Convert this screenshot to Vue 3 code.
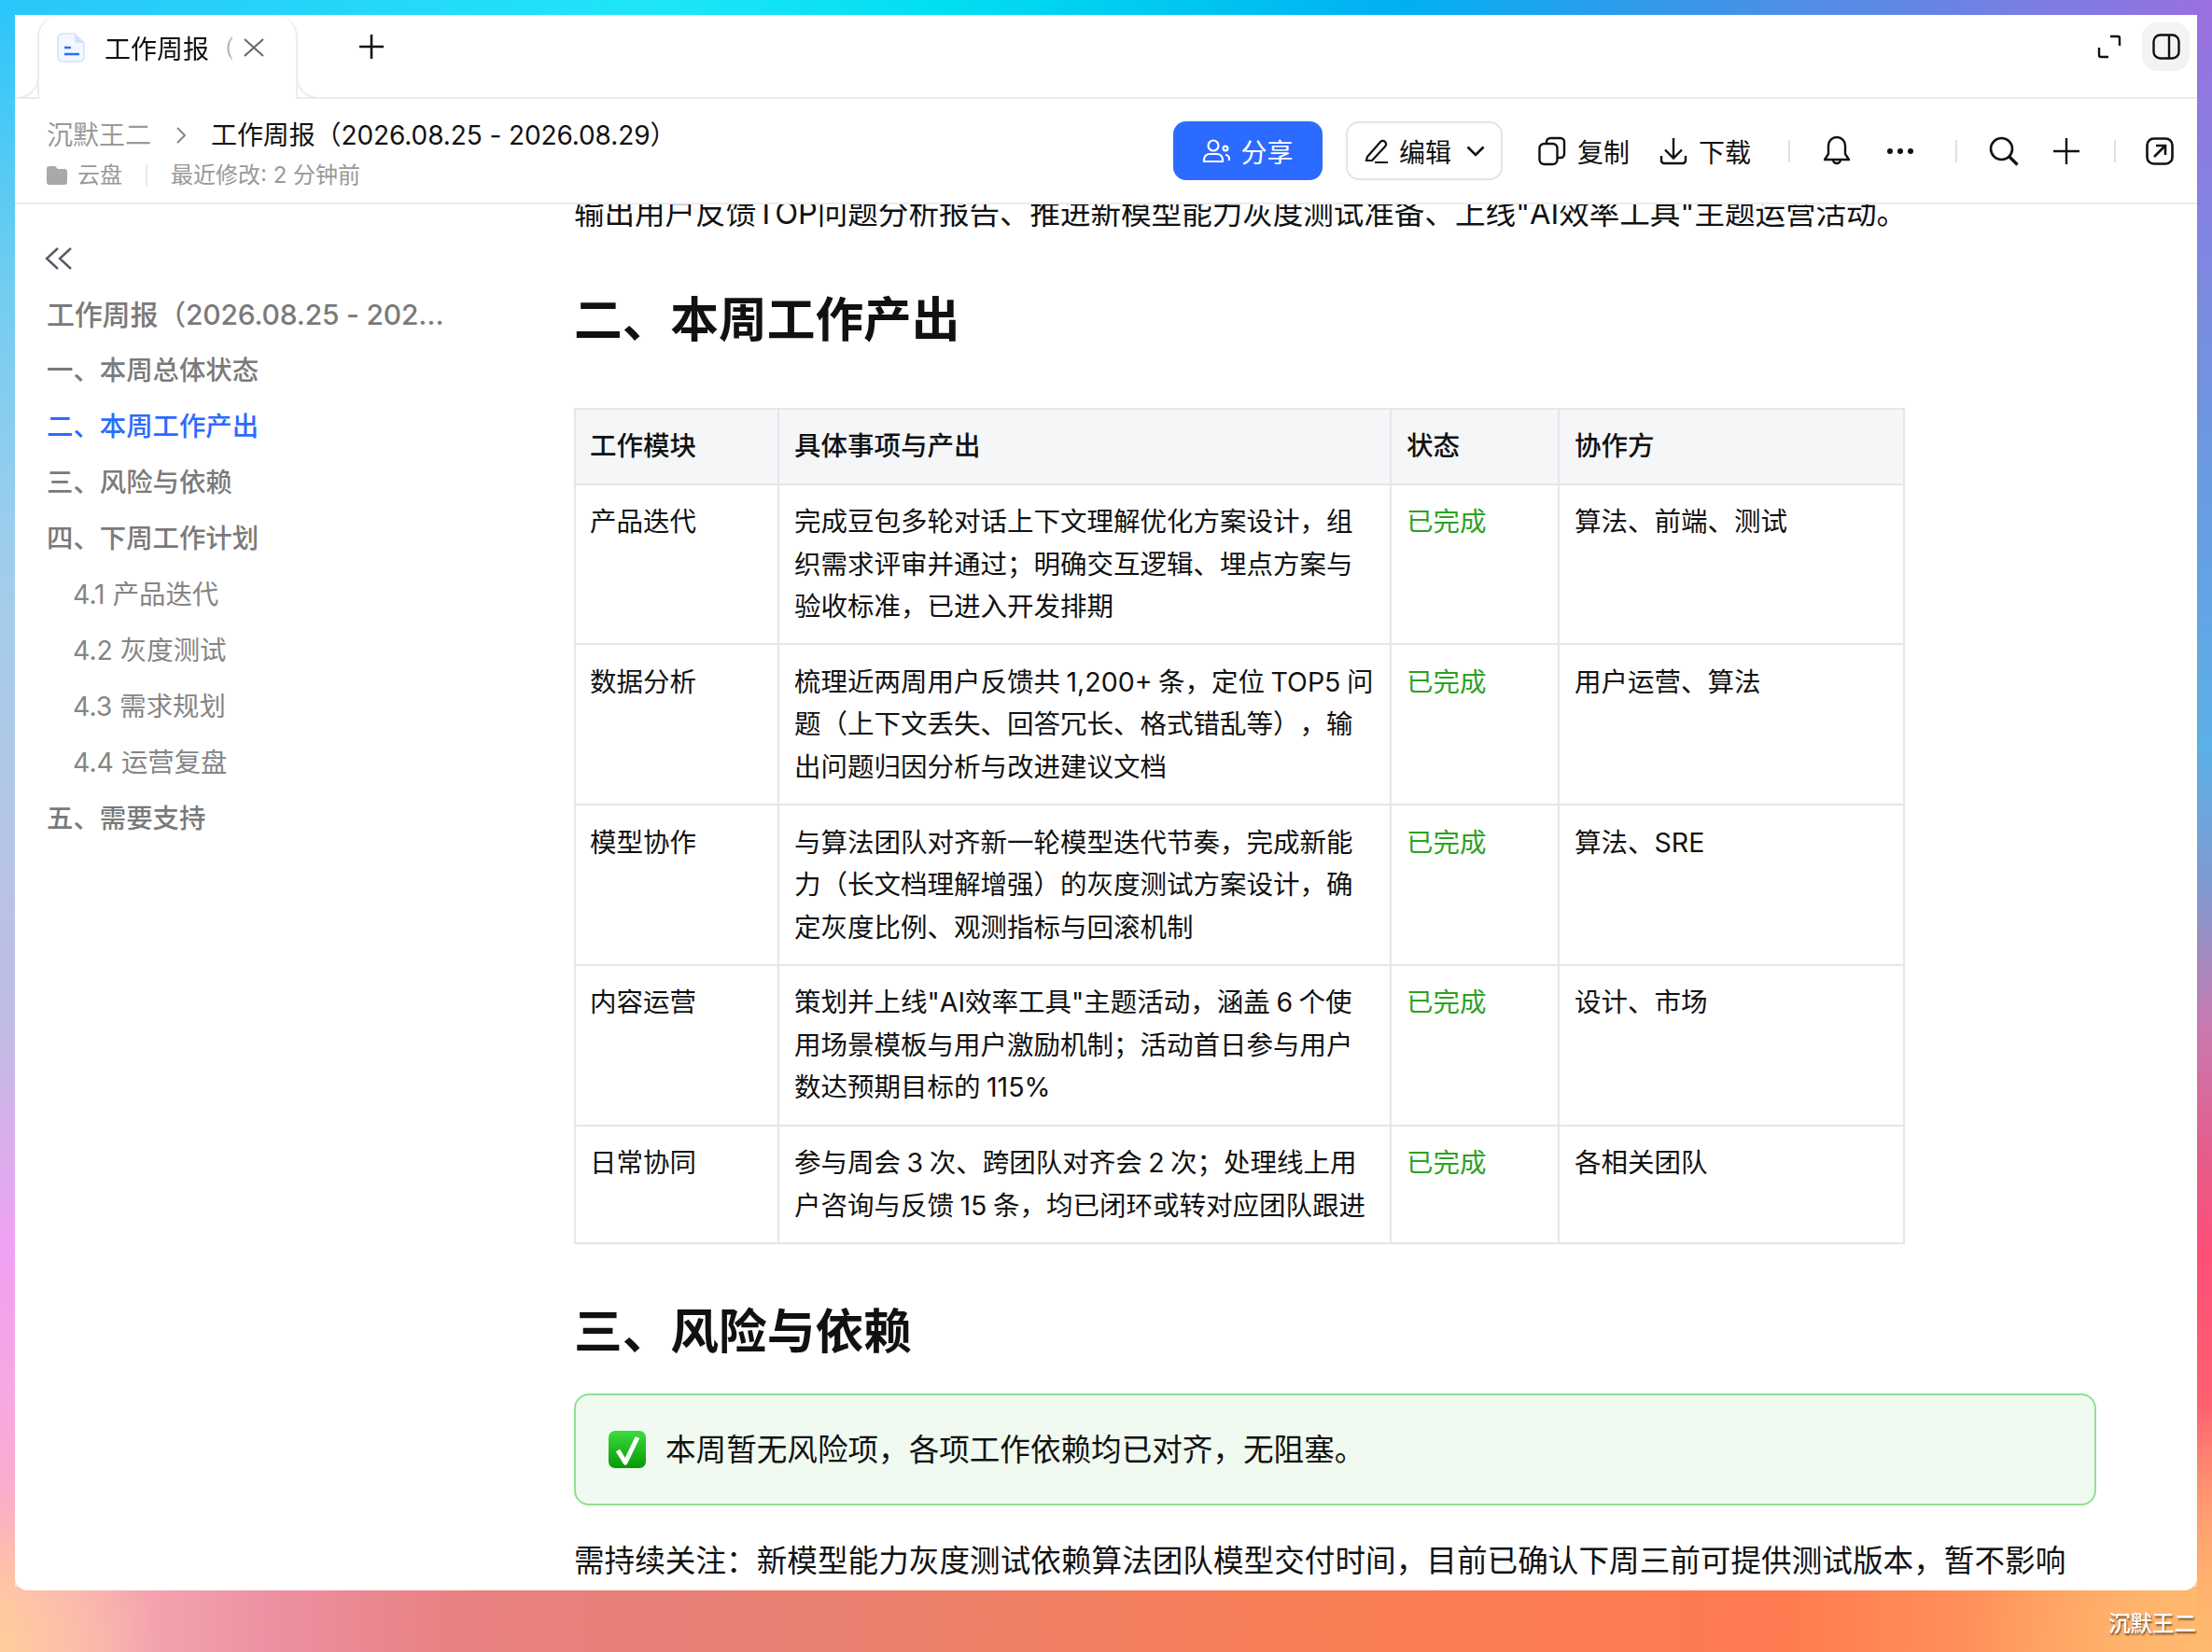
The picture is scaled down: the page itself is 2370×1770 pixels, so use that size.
<template>
  <div class="page">
    <div class="window">
      <div class="tabbar">
        <div class="tab">
          <svg class="doc-icon" viewBox="0 0 30 32" width="30" height="32" fill="none">
            <path d="M6 1h13l10 10v15a5 5 0 0 1-5 5H6a5 5 0 0 1-5-5V6a5 5 0 0 1 5-5z" fill="#f3f7ff" stroke="#d3e1ff" stroke-width="1.5" />
            <path d="M19 1l10 10h-6a4 4 0 0 1-4-4z" fill="#d3e1ff" />
            <path d="M8 16h7M8 23h16" stroke="#2f6bff" stroke-width="2.4" />
          </svg>
          <span class="tab-title">工作周报（2026.08.25 - 2026.08.29）</span>
          <svg class="tab-close" viewBox="0 0 22 20" width="22" height="20" fill="none" stroke="#666" stroke-width="2">
            <path d="M1 1l20 18M21 1L1 19" />
          </svg>
        </div>
        <svg class="tab-add" viewBox="0 0 28 28" width="28" height="28" stroke="#111" stroke-width="2.6">
          <path d="M14 1v26M1 14h26" />
        </svg>
        <div class="win-btns">
          <svg viewBox="0 0 26 26" width="26" height="26" fill="none" stroke="#111" stroke-width="2.4">
            <path d="M14 2h8a2 2 0 0 1 2 2v8M2 14v8a2 2 0 0 0 2 2h8" />
          </svg>
          <div class="panel-btn">
            <svg viewBox="0 0 30 28" width="30" height="28" fill="none" stroke="#111" stroke-width="2.4">
              <rect x="1.5" y="1.5" width="27" height="25" rx="7" />
              <path d="M18 2v24" />
            </svg>
          </div>
        </div>
      </div>

      <div class="head">
        <div class="head-left">
          <div class="crumb">
            <span class="crumb-root">沉默王二</span>
            <svg viewBox="0 0 10 18" width="10" height="18" fill="none" stroke="#888" stroke-width="2">
              <path d="M1 1l8 8-8 8" />
            </svg>
            <span class="crumb-title">工作周报（2026.08.25 - 2026.08.29）</span>
          </div>
          <div class="meta">
            <svg viewBox="0 0 22 20" width="22" height="20" fill="#a9a9a9">
              <path d="M3 0h6l3 3h7a3 3 0 0 1 3 3v11a3 3 0 0 1-3 3H3a3 3 0 0 1-3-3V3a3 3 0 0 1 3-3z" />
            </svg>
            <span>云盘</span>
            <i class="meta-sep"></i>
            <span>最近修改: 2 分钟前</span>
          </div>
        </div>

        <div class="actions">
          <div class="group buttons">
            <button class="btn-share">
              <svg viewBox="0 0 30 26" width="30" height="26" fill="none" stroke="#fff" stroke-width="2.2">
                <circle cx="12" cy="7" r="5.5" />
                <path d="M2 24v-2a6 6 0 0 1 6-6h8a6 6 0 0 1 6 6v2z" />
                <circle cx="25" cy="10" r="2.4" />
                <path d="M25 17a4 4 0 0 1 4 4v2" />
              </svg>
              分享
            </button>
            <button class="btn-edit">
              <svg viewBox="0 0 28 28" width="28" height="28" fill="none" stroke="#111" stroke-width="2.2">
                <path d="M4 20L18 4a3.5 3.5 0 0 1 5 0 3.5 3.5 0 0 1 0 5L9 24H3z" />
                <path d="M12 26h14" />
              </svg>
              编辑
              <svg viewBox="0 0 20 12" width="20" height="12" fill="none" stroke="#111" stroke-width="2.6">
                <path d="M1.5 1.5L10 10l8.5-8.5" />
              </svg>
            </button>
          </div>
          <div class="group texts">
            <div class="act">
              <svg viewBox="0 0 30 32" width="30" height="32" fill="none" stroke="#111" stroke-width="2.4">
                <rect x="1.5" y="8" width="19" height="22" rx="5" />
                <path d="M9 7V6a4 4 0 0 1 4-4h11a4 4 0 0 1 4 4v13a4 4 0 0 1-4 4h-3" />
              </svg>
              复制
            </div>
            <div class="act">
              <svg viewBox="0 0 30 30" width="30" height="30" fill="none" stroke="#111" stroke-width="2.4">
                <path d="M15 1v21M6 13.5l9 9 9-9" />
                <path d="M2 20v5a3 3 0 0 0 3 3h20a3 3 0 0 0 3-3v-5" />
              </svg>
              下载
            </div>
          </div>
          <i class="sep sep-a"></i>
          <div class="group bell-group">
            <svg viewBox="0 0 28 34" width="28" height="34" fill="none" stroke="#111" stroke-width="2.4">
              <path d="M14 2a9 9 0 0 1 9 9v9l4 6H1l4-6v-9a9 9 0 0 1 9-9z" />
              <path d="M10 26a4 4 0 0 0 8 0" />
            </svg>
            <svg viewBox="0 0 28 6" width="28" height="6" fill="#111">
              <circle cx="3" cy="3" r="3" />
              <circle cx="14" cy="3" r="3" />
              <circle cx="25" cy="3" r="3" />
            </svg>
          </div>
          <i class="sep sep-b"></i>
          <div class="group search-group">
            <svg viewBox="0 0 32 32" width="32" height="32" fill="none" stroke="#111" stroke-width="2.6">
              <circle cx="13.5" cy="13.5" r="11.5" />
              <path d="M22 22l8.5 8.5" stroke-width="3.2" />
            </svg>
            <svg viewBox="0 0 28 28" width="28" height="28" stroke="#111" stroke-width="2.4">
              <path d="M14 0v28M0 14h28" />
            </svg>
          </div>
          <i class="sep sep-c"></i>
          <svg class="open-icon" viewBox="0 0 30 30" width="30" height="30" fill="none" stroke="#111" stroke-width="2.6">
            <rect x="1.5" y="1.5" width="27" height="27" rx="7" />
            <path d="M9 21L20.5 9.5M11 9h10v10" />
          </svg>
        </div>
      </div>

      <div class="body">
        <aside class="toc">
          <svg class="collapse" viewBox="0 0 30 24" width="30" height="24" fill="none" stroke="#555b66" stroke-width="2.4">
            <path d="M14 1L2 12l12 11M28 1L16 12l12 11" />
          </svg>
          <div class="toc-title">工作周报（2026.08.25 - 2026.08.29）</div>
          <div
            v-for="item in toc"
            :key="item.text"
            class="toc-item"
            :class="{ sub: item.sub, active: item.active }"
          >
            {{ item.text }}
          </div>
        </aside>

        <main class="doc">
          <p class="cut">输出用户反馈TOP问题分析报告、推进新模型能力灰度测试准备、上线"AI效率工具"主题运营活动。</p>
          <h2 class="h-first">二、本周工作产出</h2>
          <table class="work">
            <colgroup>
              <col class="c1" />
              <col class="c2" />
              <col class="c3" />
              <col class="c4" />
            </colgroup>
            <thead>
              <tr>
                <th>工作模块</th>
                <th>具体事项与产出</th>
                <th>状态</th>
                <th>协作方</th>
              </tr>
            </thead>
            <tbody>
              <tr v-for="row in rows" :key="row.mod">
                <td>{{ row.mod }}</td>
                <td>{{ row.text }}</td>
                <td class="done">已完成</td>
                <td>{{ row.who }}</td>
              </tr>
            </tbody>
          </table>
          <h2 class="h-second">三、风险与依赖</h2>
          <div class="callout">
            <svg viewBox="0 0 40 40" width="40" height="40">
              <defs>
                <linearGradient id="chk" x1="0" y1="0" x2="0" y2="1">
                  <stop offset="0" stop-color="#3ddc3d" />
                  <stop offset="1" stop-color="#069a06" />
                </linearGradient>
              </defs>
              <rect width="40" height="40" rx="7" fill="url(#chk)" />
              <path d="M10 21l8 13L31 7" fill="none" stroke="#fff" stroke-width="5" stroke-linejoin="round" />
            </svg>
            <span>本周暂无风险项，各项工作依赖均已对齐，无阻塞。</span>
          </div>
          <p class="note">需持续关注：新模型能力灰度测试依赖算法团队模型交付时间，目前已确认下周三前可提供测试版本，暂不影响</p>
        </main>
      </div>
    </div>
    <div class="mark">沉默王二</div>
  </div>
</template>

<script setup>
const toc = [
  { text: '一、本周总体状态' },
  { text: '二、本周工作产出', active: true },
  { text: '三、风险与依赖' },
  { text: '四、下周工作计划' },
  { text: '4.1 产品迭代', sub: true },
  { text: '4.2 灰度测试', sub: true },
  { text: '4.3 需求规划', sub: true },
  { text: '4.4 运营复盘', sub: true },
  { text: '五、需要支持' },
]

const rows = [
  {
    mod: '产品迭代',
    text: '完成豆包多轮对话上下文理解优化方案设计，组织需求评审并通过；明确交互逻辑、埋点方案与验收标准，已进入开发排期',
    who: '算法、前端、测试',
  },
  {
    mod: '数据分析',
    text: '梳理近两周用户反馈共 1,200+ 条，定位 TOP5 问题（上下文丢失、回答冗长、格式错乱等），输出问题归因分析与改进建议文档',
    who: '用户运营、算法',
  },
  {
    mod: '模型协作',
    text: '与算法团队对齐新一轮模型迭代节奏，完成新能力（长文档理解增强）的灰度测试方案设计，确定灰度比例、观测指标与回滚机制',
    who: '算法、SRE',
  },
  {
    mod: '内容运营',
    text: '策划并上线"AI效率工具"主题活动，涵盖 6 个使用场景模板与用户激励机制；活动首日参与用户数达预期目标的 115%',
    who: '设计、市场',
  },
  {
    mod: '日常协同',
    text: '参与周会 3 次、跨团队对齐会 2 次；处理线上用户咨询与反馈 15 条，均已闭环或转对应团队跟进',
    who: '各相关团队',
  },
]
</script>

<style scoped>
.page {
  position: relative;
  width: 2370px;
  height: 1770px;
  box-sizing: border-box;
  padding: 16px 16px 66px;
  overflow: hidden;
  font-family: Inter, "Noto Sans CJK SC", sans-serif;
  color: #111;
  text-spacing-trim: space-all;
  background:
    radial-gradient(circle at 0 100%, #ffcc9c 0, rgba(255, 204, 156, 0) 170px),
    radial-gradient(circle at 100% 100%, #ffb96e 0, rgba(255, 185, 110, 0) 260px),
    linear-gradient(90deg, #2ac6fb 0, #1ee6f8 700px, #00e0f2 1000px, #00b0f2 1500px, #4a90e8 1900px, #9a70e0 100%) top / 100% 16px no-repeat,
    linear-gradient(180deg, #2ac6fb 0, #70cdf1 300px, #a0cdec 600px, #b5c5e5 900px, #c0bce5 1100px, #f0a0f2 1340px, #f8a8e0 1500px, #fdb0c0 1650px, #ffc8a0 100%) left / 16px 100% no-repeat,
    linear-gradient(180deg, #9a70e0 0, #6a9ae0 500px, #5cb0e8 800px, #7f9ad0 950px, #c87ab0 1100px, #e85a88 1250px, #ff4f78 1340px, #ff6070 1500px, #ff9070 1650px, #ffb070 100%) right / 16px 100% no-repeat,
    linear-gradient(90deg, #fdb8c0 0, #ec90a0 300px, #e88080 500px, #ea8070 900px, #f87f55 1400px, #ff7a50 1900px, #ff9a60 2200px, #ffb56c 100%) bottom / 100% 70px no-repeat;
}

.window {
  display: flex;
  flex-direction: column;
  height: 100%;
  background: #fff;
  border-radius: 14px;
  overflow: hidden;
}

.tabbar {
  display: flex;
  align-items: center;
  flex: none;
  height: 90px;
  box-sizing: border-box;
  padding: 0 8px 0 24px;
  border-bottom: 2px solid #ececec;
}

.tab {
  position: relative;
  display: flex;
  align-items: center;
  width: 279px;
  height: 90px;
  margin-bottom: -2px;
  box-sizing: border-box;
  padding: 0 20px 21px 19px;
  background: #fff;
  border: 2px solid #ececec;
  border-width: 0 2px;
  border-radius: 24px 24px 0 0;
}

.tab::before,
.tab::after {
  content: "";
  position: absolute;
  bottom: 0;
  width: 24px;
  height: 24px;
  box-sizing: border-box;
  border-bottom: 2px solid #ececec;
}

.tab::before {
  right: 100%;
  border-right: 2px solid #ececec;
  border-bottom-right-radius: 24px;
}

.tab::after {
  left: 100%;
  border-left: 2px solid #ececec;
  border-bottom-left-radius: 24px;
}

.doc-icon {
  flex: none;
}

.tab-title {
  flex: none;
  width: 137px;
  margin-left: 21px;
  overflow: hidden;
  font-size: 28px;
  white-space: nowrap;
  -webkit-mask-image: linear-gradient(90deg, #000 112px, rgba(0, 0, 0, 0.2) 137px);
  mask-image: linear-gradient(90deg, #000 112px, rgba(0, 0, 0, 0.2) 137px);
}

.tab-close {
  flex: none;
  margin-left: 12px;
}

.tab-add {
  margin: 0 0 21px 65px;
}

.win-btns {
  display: flex;
  align-items: center;
  gap: 22px;
  margin-left: auto;
  padding-bottom: 21px;
}

.panel-btn {
  display: flex;
  align-items: center;
  justify-content: center;
  width: 51px;
  height: 52px;
  background: #f3f3f3;
  border-radius: 16px;
}

.head {
  display: flex;
  align-items: center;
  justify-content: space-between;
  flex: none;
  height: 113px;
  box-sizing: border-box;
  padding: 0 25px 0 34px;
  border-bottom: 2px solid #ececec;
}

.head-left {
  padding-top: 6px;
}

.crumb {
  display: flex;
  align-items: center;
  font-size: 28px;
  line-height: 40px;
}

.crumb-root {
  margin-right: 27px;
  color: #999;
}

.crumb-title {
  margin-left: 27px;
  letter-spacing: -0.1px;
}

.meta {
  display: flex;
  align-items: center;
  margin-top: 6px;
  font-size: 24px;
  line-height: 34px;
  color: #999;
}

.meta span:first-of-type {
  margin-left: 11px;
}

.meta-sep {
  width: 2px;
  height: 24px;
  margin: 0 25px;
  background: #e8e8e8;
}

.actions {
  display: flex;
  align-items: center;
}

.group {
  display: flex;
  align-items: center;
}

.buttons {
  gap: 25px;
}

.texts {
  gap: 32px;
  margin-left: 38px;
}

.bell-group {
  gap: 40px;
  margin-left: 36px;
}

.search-group {
  gap: 37px;
  margin-left: 34px;
}

.open-icon {
  margin-left: 32px;
}

.btn-share,
.btn-edit {
  display: flex;
  align-items: center;
  justify-content: center;
  height: 63px;
  box-sizing: border-box;
  font-family: inherit;
  font-size: 28px;
  border-radius: 14px;
}

.btn-share {
  gap: 11px;
  width: 160px;
  color: #fff;
  background: #2b6bff;
  border: none;
}

.btn-edit {
  gap: 10px;
  width: 168px;
  color: #111;
  background: #fff;
  border: 2px solid #e5e5e5;
}

.btn-edit svg:last-child {
  margin-left: 6px;
}

.act {
  display: flex;
  align-items: center;
  gap: 12px;
  font-size: 28px;
}

.sep {
  width: 2px;
  height: 24px;
  background: #dfdfe4;
}

.sep-a {
  margin-left: 40px;
}

.sep-b {
  margin-left: 45px;
}

.sep-c {
  margin-left: 37px;
}

.body {
  display: flex;
  flex: 1;
  min-height: 0;
}

.toc {
  flex: none;
  width: 599px;
  box-sizing: border-box;
  padding: 46px 0 0 34px;
}

.collapse {
  display: block;
  margin-left: -2px;
}

.toc-title {
  width: 440px;
  margin: 23px 0 5px;
  overflow: hidden;
  font-size: 30px;
  font-weight: 500;
  line-height: 50px;
  letter-spacing: -0.2px;
  color: #7a7a7a;
  white-space: nowrap;
  text-overflow: ellipsis;
}

.toc-item {
  height: 60px;
  font-size: 28.4px;
  font-weight: 500;
  line-height: 60px;
  color: #7a7a7a;
}

.toc-item.sub {
  padding-left: 28px;
  font-weight: 400;
  color: #858585;
}

.toc-item.active {
  color: #2b6bff;
}

.doc {
  flex: none;
  width: 1631px;
  overflow: hidden;
  font-size: 32.6px;
  line-height: 46px;
}

.cut {
  margin: -14px 0 0;
  letter-spacing: -0.05px;
  white-space: nowrap;
}

h2 {
  font-size: 51.7px;
  font-weight: 600;
  line-height: 70px;
}

.h-first {
  margin: 56px 0 60px;
}

.h-second {
  margin: 58px 0 32.5px;
}

.work {
  width: 1424px;
  font-size: 28.5px;
  line-height: 45.5px;
  word-spacing: -1.5px;
  table-layout: fixed;
  border-collapse: collapse;
}

.c1 {
  width: 218px;
}

.c2 {
  width: 656px;
}

.c3 {
  width: 180px;
}

.c4 {
  width: 370px;
}

th,
td {
  padding: 16.4px 14px 16.85px 16px;
  text-align: left;
  vertical-align: top;
  border: 2px solid #e4e6ea;
}

th:first-child,
td:first-child {
  padding-left: 15px;
}

th {
  font-weight: 500;
  background: #f5f6f8;
}

.done {
  color: #2ea121;
}

.callout {
  display: flex;
  align-items: center;
  gap: 21px;
  height: 120px;
  box-sizing: border-box;
  padding: 0 35px;
  background: #f0faf0;
  border: 2px solid #8fe08f;
  border-radius: 16px;
}

.note {
  margin: 35.5px 0 0;
  letter-spacing: 0.04px;
}

.mark {
  position: absolute;
  right: 17px;
  bottom: 14px;
  font-size: 23.5px;
  font-weight: 500;
  line-height: 32px;
  color: #fff;
  text-shadow: 1px 2px 2px rgba(0, 0, 0, 0.55);
}
</style>
